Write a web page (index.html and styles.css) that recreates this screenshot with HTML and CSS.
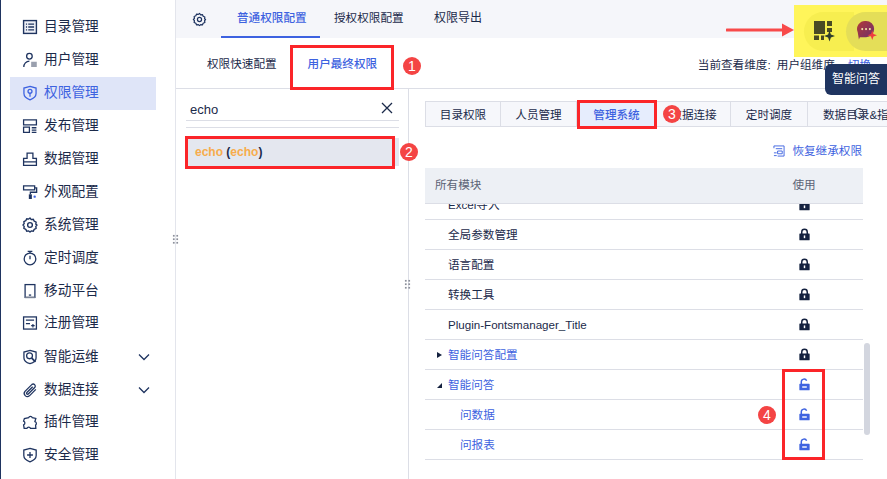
FILE: index.html
```html
<!DOCTYPE html>
<html lang="zh">
<head>
<meta charset="utf-8">
<title>权限管理</title>
<link rel="stylesheet" href="styles.css">
</head>
<body>
<svg class="defs" width="0" height="0" aria-hidden="true">
  <defs><linearGradient id="botg" x1="0" y1="0" x2="1" y2="1"><stop offset="0" stop-color="#b23a38"/><stop offset="1" stop-color="#6c2f6e"/></linearGradient></defs>
  <symbol id="lock" viewBox="0 0 12 14"><path d="M3 6.500V4.200a3 3 0 0 1 6 0v2.300" fill="none" stroke="currentColor" stroke-width="1.600"/><path d="M1 6h10a.6.6 0 0 1 .6.6v6a.6.6 0 0 1-.6.6H1a.6.6 0 0 1-.6-.6v-6A.6.6 0 0 1 1 6z" fill="currentColor"/><rect x="5.200" y="8" width="1.600" height="3" fill="#fff"/></symbol>
  <symbol id="unlock" viewBox="0 0 12 14"><path d="M2.500 6.500V4a3 3 0 0 1 5.800-1" fill="none" stroke="currentColor" stroke-width="1.600"/><path d="M1 6.200h10a.6.6 0 0 1 .6.6v5.800a.6.6 0 0 1-.6.6H1a.6.6 0 0 1-.6-.6V6.800a.6.6 0 0 1 .6-.6z" fill="currentColor"/><rect x="3.500" y="9" width="5" height="1.500" fill="#fff"/></symbol>
  <symbol id="gear" viewBox="0 0 16 16"><path d="M8 1.500l1.200 1.500 1.900-.3.800 1.800 1.800.8-.3 1.900L14.500 8l-1.100 1.300.3 1.900-1.800.8-.8 1.800-1.900-.3L8 14.500l-1.200-1-1.900.3-.8-1.800-1.800-.8.3-1.900L1.500 8l1.100-1.300-.3-1.900 1.800-.8.8-1.800 1.900.3z" fill="none" stroke="currentColor" stroke-width="1.300" stroke-linejoin="round"/><circle cx="8" cy="8" r="2.200" fill="none" stroke="currentColor" stroke-width="1.300"/></symbol>
  <symbol id="chev" viewBox="0 0 12 8"><path d="M1 1.500l5 5 5-5" fill="none" stroke="currentColor" stroke-width="1.300"/></symbol>
</svg>
<div class="app">
  <nav class="nav">
    <a class="nav-item"><svg class="ico" viewBox="2 2 12 12"><rect x="2.500" y="2.500" width="11" height="11" fill="#eef0f6" stroke="currentColor" stroke-width="1.200"/><path d="M4.500 5.500h1M6.500 5.500h5M4.500 8h1M6.500 8h5M4.500 10.500h1M6.500 10.500h5" stroke="currentColor" stroke-width="1.100"/></svg><span>目录管理</span></a>
    <a class="nav-item"><svg class="ico" viewBox="2 2 12 12"><circle cx="7.500" cy="4.800" r="2.400" fill="none" stroke="currentColor" stroke-width="1.100"/><path d="M2.700 14a4.800 4.800 0 0 1 4.800-5" fill="none" stroke="currentColor" stroke-width="1.100"/><rect x="9" y="9.500" width="4.800" height="4.500" fill="#9aa0ae"/></svg><span>用户管理</span></a>
    <a class="nav-item is-active"><svg class="ico" viewBox="2 2 12 12"><path d="M8 2.300l5.200 1.500v4.700c0 2.800-2.500 4.400-5.200 5.300-2.700-.9-5.200-2.500-5.200-5.300V3.800z" fill="none" stroke="currentColor" stroke-width="1.100"/><circle cx="8" cy="6.500" r="1.700" fill="none" stroke="currentColor" stroke-width="1.100"/><path d="M8 8.200v3" stroke="currentColor" stroke-width="1.100"/></svg><span>权限管理</span></a>
    <a class="nav-item"><svg class="ico" viewBox="2 2 12 12"><path d="M2.500 2.800h11v4.200h-11zM2.500 9h5v4.500h-5zM9.500 9.500h4M9.500 11.500h4M9.500 13.500h4" fill="none" stroke="currentColor" stroke-width="1.100"/></svg><span>发布管理</span></a>
    <a class="nav-item"><svg class="ico" viewBox="2 2 12 12"><path d="M2.500 7.500h3V3h5v4.500h3v6h-11zM2.500 10.500h11" fill="none" stroke="currentColor" stroke-width="1.100"/></svg><span>数据管理</span></a>
    <a class="nav-item"><svg class="ico" viewBox="2 2 12 12"><path d="M2.500 2.800h9.500v3.400H2.500zM12 4.500h1.700v3.700H8.300V10" fill="none" stroke="currentColor" stroke-width="1.100"/><rect x="7" y="10" width="2.600" height="4" fill="currentColor"/><circle cx="12" cy="12" r="1" fill="#3d62e0"/></svg><span>外观配置</span></a>
    <a class="nav-item"><svg class="ico" viewBox="1.500 1.500 13 13"><use href="#gear" x="0" y="0" width="16" height="16"/></svg><span>系统管理</span></a>
    <a class="nav-item"><svg class="ico" viewBox="2 2 12 12"><circle cx="8" cy="8.800" r="5" fill="none" stroke="currentColor" stroke-width="1.100"/><path d="M6 2.300h4M8 2.300v1.500M8 6v3" fill="none" stroke="currentColor" stroke-width="1.100"/></svg><span>定时调度</span></a>
    <a class="nav-item"><svg class="ico" viewBox="2 2 12 12"><rect x="3.800" y="2.500" width="8.400" height="11" fill="none" stroke="currentColor" stroke-width="1.100"/><path d="M7 11.500h2" stroke="currentColor" stroke-width="1.100"/><path d="M3.800 13.500h8.400" stroke="#7b8496" stroke-width="1.200"/></svg><span>移动平台</span></a>
    <a class="nav-item"><svg class="ico" viewBox="2 2 12 12"><rect x="2.500" y="2.800" width="11" height="10.400" fill="none" stroke="currentColor" stroke-width="1.100"/><path d="M4.500 5.500h7M4.500 8.500h3.500M9 10.300h3M10.500 8.800v3" stroke="currentColor" stroke-width="1"/></svg><span>注册管理</span></a>
    <a class="nav-item nav-tall"><svg class="ico" viewBox="2 2 12 12"><path d="M8 2.300l5.200 1.500v5c0 2.600-2.300 4-5.200 4.900-2.900-.9-5.200-2.300-5.200-4.900v-5z" fill="none" stroke="currentColor" stroke-width="1.100"/><circle cx="7.600" cy="7" r="2.500" fill="none" stroke="currentColor" stroke-width="1.100"/><path d="M9.500 9l3.200 3.200" stroke="currentColor" stroke-width="1.500"/></svg><span>智能运维</span><svg class="chev"><use href="#chev"/></svg></a>
    <a class="nav-item"><svg class="ico" viewBox="2 2 12 12"><path d="M13 7.500l-5.500 5.500a2.700 2.700 0 0 1-3.800-3.800l6-6a1.800 1.800 0 0 1 2.500 2.500l-5.700 5.700a.8.800 0 0 1-1.200-1.200l5-5" fill="none" stroke="currentColor" stroke-width="1.100"/></svg><span>数据连接</span><svg class="chev"><use href="#chev"/></svg></a>
    <a class="nav-item nav-short"><svg class="ico" viewBox="2 2 12 12"><path d="M6.800 4.300a1.700 1.700 0 0 1 3.200 0l3 .7-.8 2.600a1.700 1.700 0 0 1 .6 3L13 13.500H8.500a1.700 1.700 0 0 0-3.200 0H3l-.5-3a1.700 1.700 0 0 0 0-3.200L3.200 5z" fill="none" stroke="currentColor" stroke-width="1.100"/></svg><span>插件管理</span></a>
    <a class="nav-item nav-last"><svg class="ico" viewBox="2 2 12 12"><path d="M8 2.300l5.300 1.500v4.700c0 2.800-2.500 4.400-5.300 5.300-2.800-.9-5.300-2.500-5.300-5.300V3.800z" fill="none" stroke="currentColor" stroke-width="1.100"/><path d="M5.500 8h5M8 5.500v5" stroke="currentColor" stroke-width="1.100"/></svg><span>安全管理</span></a>
  </nav>

  <main class="main">
    <header class="topbar">
      <svg class="gear"><use href="#gear"/></svg>
      <a class="top-tab is-on">普通权限配置</a>
      <a class="top-tab">授权权限配置</a>
      <a class="top-tab">权限导出</a>
    </header>
    <div class="subbar">
      <a class="sub-tab">权限快速配置</a>
      <a class="sub-tab is-on">用户最终权限</a>
      <div class="dim"><span>当前查看维度: 用户组维度</span><a class="dim-link">切换</a></div>
    </div>
    <div class="split">
      <section class="users">
        <div class="search"><span>echo</span><svg class="clear" viewBox="0 0 12 12"><path d="M1 1l10 10M11 1L1 11" stroke="currentColor" stroke-width="1.300"/></svg></div>
        <div class="rule"></div>
        <div class="user-row"><b>echo</b> (<b>echo</b>)</div>
      </section>
      <section class="perms">
        <div class="tabs">
          <a class="tab">目录权限</a>
          <a class="tab">人员管理</a>
          <a class="tab is-on">管理系统</a>
          <a class="tab">数据连接</a>
          <a class="tab">定时调度</a>
          <a class="tab tab-last">数据目录&amp;指标</a>
        </div>
        <div class="restore"><svg class="restore-ico" viewBox="0 0 13 13"><path d="M1 3.500V1h11v11H5M3 4h7M5 6.500h5v3H5zM1 8.500h3M1 11.500h3" fill="none" stroke="currentColor" stroke-width="1"/></svg><span>恢复继承权限</span></div>
        <div class="table">
          <div class="thead"><span class="col-name">所有模块</span><span class="col-use">使用</span></div>
          <div class="tbody">
            <div class="row row-first"><span class="col-name">Excel导入</span><span class="col-use"><svg class="lock"><use href="#lock"/></svg></span></div>
            <div class="row"><span class="col-name">全局参数管理</span><span class="col-use"><svg class="lock"><use href="#lock"/></svg></span></div>
            <div class="row"><span class="col-name">语言配置</span><span class="col-use"><svg class="lock"><use href="#lock"/></svg></span></div>
            <div class="row"><span class="col-name">转换工具</span><span class="col-use"><svg class="lock"><use href="#lock"/></svg></span></div>
            <div class="row"><span class="col-name">Plugin-Fontsmanager_Title</span><span class="col-use"><svg class="lock"><use href="#lock"/></svg></span></div>
            <div class="row is-link"><span class="col-name"><i class="tri tri-right"></i>智能问答配置</span><span class="col-use"><svg class="lock"><use href="#lock"/></svg></span></div>
            <div class="row is-link"><span class="col-name"><i class="tri tri-down"></i>智能问答</span><span class="col-use open"><svg class="lock"><use href="#unlock"/></svg></span></div>
            <div class="row is-link is-child"><span class="col-name">问数据</span><span class="col-use open"><svg class="lock"><use href="#unlock"/></svg></span></div>
            <div class="row is-link is-child"><span class="col-name">问报表</span><span class="col-use open"><svg class="lock"><use href="#unlock"/></svg></span></div>
          </div>
          <div class="scrollbar"></div>
        </div>
      </section>
    </div>
  </main>

  <i class="grip grip-a"></i>
  <i class="grip grip-b"></i>

  <div class="mark box-1"></div>
  <div class="mark box-2"></div>
  <div class="mark box-3"></div>
  <div class="mark box-4"></div>
  <div class="badge badge-1">1</div>
  <div class="badge badge-2">2</div>
  <div class="badge badge-3">3</div>
  <div class="badge badge-4">4</div>

  <div class="highlight">
    <div class="pill">
      <svg class="pill-a" viewBox="0 0 20 20"><path d="M0 0h11v13H0zM13 0h5v5h-5zM13 7h5v4h-5zM0 14.500h5V19H0zM7 14.500h3V19H7z" fill="#4a4a24"/><path d="M15.500 9.500l1.400 4.100 4.100 1.400-4.100 1.400-1.400 4.100-1.400-4.100-4.100-1.400 4.100-1.400z" fill="#2f3d2c"/></svg>
    </div>
    <div class="bot">
      <svg class="bot-a" viewBox="0 0 21 21"><path d="M9.500 0a8.500 8.500 0 0 1 0 17H3l-1 2.500L.8 12A8.500 8.500 0 0 1 9.500 0z" fill="url(#botg)"/><circle cx="5.500" cy="8.500" r="1.100" fill="#f2e6a8"/><circle cx="9.500" cy="8.500" r="1.100" fill="#f2e6a8"/><circle cx="13.500" cy="8.500" r="1.100" fill="#f2e6a8"/><path d="M16 10l1.300 3.700L21 15l-3.700 1.300L16 20l-1.300-3.700L11 15l3.700-1.300z" fill="#ef3c3f"/></svg>
    </div>
  </div>
  <svg class="arrow" viewBox="0 0 68 14"><path d="M1 7h56" stroke="#f84a4a" stroke-width="3" stroke-linecap="round"/><path d="M56 .5L68 7 56 13.500z" fill="#f84a4a"/></svg>
  <div class="tooltip">智能问答</div>
  <i class="ring"></i>
</div>
</body>
</html>
```

FILE: styles.css
```css
* { box-sizing: border-box; }
html, body { margin: 0; height: 100%; overflow: hidden; background: #fff; }
body { font: 11.6px/1.4 "Liberation Sans", "Noto Sans CJK SC", sans-serif; color: #1b2a4a; }
a { color: inherit; text-decoration: none; }
.defs { position: absolute; }

.app { position: relative; display: flex; width: 887px; height: 479px; overflow: hidden; border-left: 1px solid #1f3460; }

.nav { width: 175px; flex: none; padding: 11px 0 0 9px; border-right: 1px solid #e3e5ec; }
.nav-item { display: flex; align-items: center; width: 146px; height: 33px; padding: 0 0 2px 13px; font-size: 13.7px; color: #1b2a4a; }
.nav-item .ico { width: 14px; height: 14px; margin-right: 7px; flex: none; color: #1f3460; overflow: visible; }
.nav-item.is-active { background: #dfe5f8; color: #3d62e0; }
.nav-item.is-active .ico { color: #3d62e0; }
.nav-item:nth-child(9) { height: 32px; padding-bottom: 0; }
.nav-tall { height: 34px; padding-bottom: 0; }
.nav-short { height: 31px; }
.nav-last { padding-bottom: 0; }
.chev { width: 12px; height: 8px; margin-left: 39px; color: #1f3460; }

.main { flex: 1; min-width: 0; display: flex; flex-direction: column; }
.topbar { display: flex; align-items: stretch; height: 38px; padding-left: 16px; background: #f5f6fa; }
.gear { width: 15px; height: 15px; align-self: center; margin-right: 14px; color: #1f3460; }
.top-tab { display: flex; align-items: center; padding: 1px 14px 0 16px; width: 99px; border-bottom: 2px solid transparent; white-space: nowrap; }
.top-tab.is-on { color: #3d62e0; border-bottom-color: #3d62e0; font-weight: 500; }
.top-tab + .top-tab { width: 100px; padding-left: 14px; }
.top-tab:last-child { font-size: 12px; }

.subbar { display: flex; align-items: center; height: 51px; padding: 0 16px 0 31px; border-bottom: 1px solid #dcdee6; }
.sub-tab { margin-right: 31px; white-space: nowrap; margin-top: 3px; }
.sub-tab.is-on { color: #3d62e0; font-weight: 500; }
.dim { margin-left: auto; margin-top: 5px; display: flex; gap: 13px; white-space: nowrap; word-spacing: 3px; }
.dim-link { color: #3d62e0; }

.split { flex: 1; display: flex; min-height: 0; }
.users { width: 233px; flex: none; padding: 0 9px 0 10px; border-right: 1px solid #dcdee6; }
.search { display: flex; align-items: center; justify-content: space-between; height: 32px; padding: 12px 6px 0 4px; border-bottom: 1px solid #dcdee6; font-size: 13px; }
.clear { width: 12px; height: 12px; margin-top: -6px; }
.rule { height: 1px; margin-top: 6px; background: #dcdee6; }
.user-row { height: 28px; margin-top: 10px; padding-left: 9px; background: #e4e7ef; line-height: 28px; font-size: 12px; font-weight: 700; }
.user-row b { color: #f7ac4c; font-weight: 700; }

.perms { flex: 1; min-width: 0; padding: 12px 0 0 16px; }
.tabs { display: flex; height: 26px; border: 1px solid #dcdee6; border-right: 0; background: #f6f7fb; }
.tab { display: flex; align-items: center; justify-content: center; flex: none; width: 75px; padding-top: 2px; border-right: 1px solid #dcdee6; white-space: nowrap; }
.tab.is-on { width: 80px; background: #e6edfd; color: #3d62e0; font-weight: 500; }
.tab-last { justify-content: flex-start; padding-left: 15px; width: 80px; border-right: 0; }
.tab:nth-child(2) { width: 76px; }
.tab:nth-child(4) { width: 74px; }
.tab:nth-child(5) { width: 77px; }

.restore { display: flex; align-items: center; justify-content: flex-end; height: 41px; width: 438px; padding: 7px 1px 0 0; color: #3d62e0; gap: 7px; }
.restore-ico { width: 12px; height: 12px; }

.table { position: relative; height: 292px; width: 438px; }
.thead { position: relative; z-index: 1; display: flex; align-items: center; height: 36px; background: #edf0f5; border-bottom: 1px solid #dcdee6; color: #5c6475; }
.col-name { flex: 1; padding-left: 10px; display: flex; align-items: center; }
.col-use { width: 100px; padding-right: 18px; display: flex; justify-content: center; }
.tbody { height: 256px; overflow: hidden; }
.row { display: flex; align-items: center; height: 30px; border-bottom: 1px solid #dcdee6; padding-left: 14px; }
.row .col-name { padding: 1px 0 0 9px; }
.row-first { margin-top: -14px; }
.is-link { color: #3d62e0; }
.row .col-use { color: #14213f; }
.row .col-use.open { color: #3d62e0; }
.row.is-child .col-name { padding-left: 21px; }
.lock { width: 11px; height: 13px; }
.tri { position: absolute; left: 12px; width: 0; height: 0; }
.tri-right { border-left: 5px solid #14213f; border-top: 3.500px solid transparent; border-bottom: 3.500px solid transparent; }
.tri-down { border-right: 5px solid #14213f; border-top: 5px solid transparent; }
.scrollbar { position: absolute; left: 439px; top: 175px; width: 6px; height: 92px; border-radius: 3px; background: #d3d6df; }

.grip { position: absolute; width: 7px; height: 10px; background: radial-gradient(circle, #8b8f9a 0.8px, transparent 1px) 0 0 / 3.500px 3.500px; }
.grip-a { left: 171px; top: 234px; }
.grip-b { left: 403px; top: 279px; }

.mark { position: absolute; border: 3px solid #fb2529; }
.box-1 { left: 289px; top: 45px; width: 104px; height: 45px; }
.box-2 { left: 184px; top: 136px; width: 210px; height: 33px; }
.box-3 { left: 576px; top: 100px; width: 80px; height: 29px; }
.box-4 { left: 781px; top: 369px; width: 43px; height: 91px; }

.badge { position: absolute; width: 18px; height: 18px; border-radius: 50%; background: #f44444; color: #fff; font-size: 14px; line-height: 18px; text-align: center; }
.badge-1 { left: 402px; top: 57px; }
.badge-2 { left: 399px; top: 143px; }
.badge-3 { left: 662px; top: 105px; }
.badge-4 { left: 757px; top: 406px; }

.highlight { position: absolute; left: 793px; top: 5px; width: 93px; height: 52px; padding-left: 10px; display: flex; background: #fff55a; align-items: center; }
.pill { width: 50px; height: 39px; border-radius: 19.500px 0 0 19.500px; background: #f7ee50; display: flex; align-items: center; padding-left: 10px; flex: none; }
.pill-a { width: 20px; height: 20px; overflow: visible; }
.bot { width: 41px; height: 39px; margin-left: -8px; border-radius: 19.500px 0 0 19.500px; background: #e4de58; display: flex; align-items: center; padding-left: 11px; flex: none; }
.bot-a { width: 20px; height: 20px; overflow: visible; }

.arrow { position: absolute; left: 725px; top: 23px; width: 68px; height: 14px; }
.tooltip { position: absolute; left: 824px; top: 64px; width: 64px; height: 31px; border-radius: 6px 0 0 6px; background: #1f3460; color: #fff; font-size: 12px; line-height: 31px; text-align: center; padding-right: 2px; }
.ring { position: absolute; left: 853px; top: 108px; width: 10px; height: 10px; border: 1px solid #333c52; border-radius: 50%; }
```
